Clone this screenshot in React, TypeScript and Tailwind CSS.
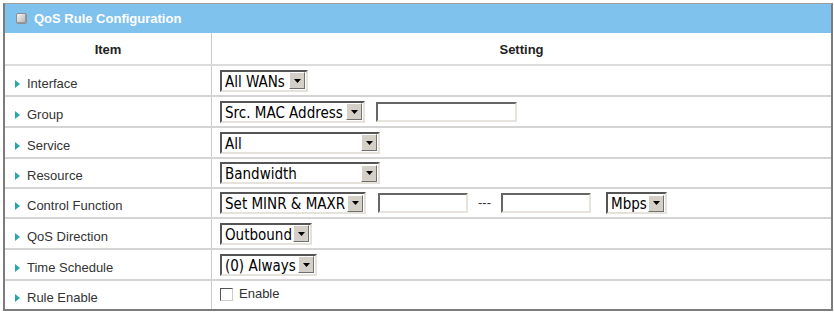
import React from 'react';

const rows = [
  { label: 'Interface', h: 'h-[31px]' },
  { label: 'Group', h: 'h-[31px]' },
  { label: 'Service', h: 'h-[31px]' },
  { label: 'Resource', h: 'h-[30px]' },
  { label: 'Control Function', h: 'h-[30px]' },
  { label: 'QoS Direction', h: 'h-[31px]' },
  { label: 'Time Schedule', h: 'h-[31px]' },
  { label: 'Rule Enable', h: 'h-[28px]' },
];

function Select({ value, w }: { value: string; w: string }) {
  return (
    <div
      className={`${w} h-[22px] flex items-center bg-white border-2 border-t-[#555] border-l-[#555] border-b-[#e4e2da] border-r-[#e4e2da] font-['DejaVu_Sans_Condensed','DejaVu_Sans',sans-serif] text-[15px] text-black leading-[18px]`}
    >
      <span className="flex-1 pl-[3px] pt-[2px] whitespace-nowrap">{value}</span>
      <span className="w-[16px] h-[17px] mr-[1px] flex items-center justify-center bg-[#d4d0c8] border border-t-white border-l-white border-b-[#707070] border-r-[#707070]">
        <svg width="7" height="4" viewBox="0 0 7 4">
          <path d="M0 0h7L3.5 4z" fill="#000" />
        </svg>
      </span>
    </div>
  );
}

function TextBox({ w }: { w: string }) {
  return (
    <div className={`${w} h-[20px] bg-white border-2 border-t-[#666] border-l-[#666] border-b-[#e6e4dc] border-r-[#e6e4dc]`} />
  );
}

function Setting({ i }: { i: number }) {
  switch (i) {
    case 0:
      return <Select value="All WANs" w="w-[88px]" />;
    case 1:
      return (
        <div className="flex items-center">
          <Select value="Src. MAC Address" w="w-[145px]" />
          <div className="ml-[11px]"><TextBox w="w-[141px]" /></div>
        </div>
      );
    case 2:
      return <Select value="All" w="w-[160px]" />;
    case 3:
      return <Select value="Bandwidth" w="w-[160px]" />;
    case 4:
      return (
        <div className="flex items-center">
          <Select value="Set MINR & MAXR" w="w-[146px]" />
          <div className="ml-[12px]"><TextBox w="w-[90px]" /></div>
          <span className="w-[33px] text-center text-[13px] text-[#333] font-['Liberation_Sans',Arial,sans-serif]">---</span>
          <TextBox w="w-[90px]" />
          <div className="ml-[15px]"><Select value="Mbps" w="w-[61px]" /></div>
        </div>
      );
    case 5:
      return <Select value="Outbound" w="w-[92px]" />;
    case 6:
      return <Select value="(0) Always" w="w-[97px]" />;
    default:
      return (
        <label className="flex items-center gap-[6px] text-[13px] text-[#333] font-['Liberation_Sans',Arial,sans-serif] -mt-[2px]">
          <span className="w-[13px] h-[13px] bg-white border border-t-[#555] border-l-[#555] border-b-[#ccc] border-r-[#ccc]" />
          Enable
        </label>
      );
  }
}

export default function App() {
  return (
    <div className="w-[834px] h-[313px] bg-white pt-[3px] pl-[3px] font-['Liberation_Sans',Arial,sans-serif]">
      <div className="w-[830px] h-[308px] border-2 border-t-[1px] border-[#7c7c7c] border-t-[#a0a0a0] bg-white">
        <div className="h-[29px] bg-[#80c2ee] flex items-center pl-[11px] gap-[7px]">
          <span className="w-[11px] h-[11px] rounded-[2px] bg-gradient-to-br from-[#f6f6f6] to-[#b0b0b0] border border-[#8e8e8e] shadow-[inset_-1px_-1px_0_#999]" />
          <span className="text-white font-bold text-[13px]">QoS Rule Configuration</span>
        </div>
        <div className="flex h-[33px] border-b-2 border-[#dcdcdc] text-[13px] font-bold text-[#222]">
          <div className="w-[207px] flex items-center justify-center border-r border-[#ccc] pt-[2px]">Item</div>
          <div className="flex-1 flex items-center justify-center pt-[2px]">Setting</div>
        </div>
        {rows.map((r, i) => (
          <div key={r.label} className={`flex ${r.h} ${i < rows.length - 1 ? 'border-b-2 border-[#d4d4d4]' : ''}`}>
            <div className="w-[207px] flex items-center pl-[10px] pt-[6px] border-r border-[#ccc] text-[13px] text-[#333]">
              <svg width="5" height="8" viewBox="0 0 5 8" className="mr-[7px]">
                <path d="M0 0L5 4L0 8z" fill="#2aa6a6" />
              </svg>
              {r.label}
            </div>
            <div className="flex-1 flex items-center pl-[8px]">
              <Setting i={i} />
            </div>
          </div>
        ))}
      </div>
    </div>
  );
}
